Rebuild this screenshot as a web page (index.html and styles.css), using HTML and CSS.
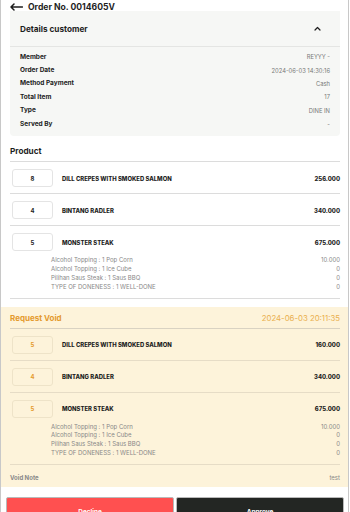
FILE: index.html
```html
<!DOCTYPE html>
<html lang="en">
<head>
    <meta charset="UTF-8">
    <meta name="viewport" content="width=device-width, initial-scale=1.0">
    <title>Order No. 0014605V</title>
    <link rel="stylesheet" href="styles.css">
</head>
<body>
    <div class="page">
        <header class="topbar">
            <svg class="back" width="13" height="8" viewBox="0 0 13 8">
                <path d="M4 1 L1 4 L4 7 M1 4 H12.5" fill="none" stroke="#1e1e1e" stroke-width="1.5" stroke-linecap="round" stroke-linejoin="round"/>
            </svg>
            <h1>Order No. 0014605V</h1>
        </header>

        <section class="details">
            <div class="details-head">
                <span>Details customer</span>
                <svg width="7" height="5" viewBox="0 0 7 5">
                    <path d="M1 4 L3.5 1.5 L6 4" fill="none" stroke="#1e1e1e" stroke-width="1.2" stroke-linecap="round" stroke-linejoin="round"/>
                </svg>
            </div>
            <div class="info">
                <div class="info-row"><span>Member</span><span>REYYY -</span></div>
                <div class="info-row"><span>Order Date</span><span>2024-06-03 14:30:16</span></div>
                <div class="info-row"><span>Method Payment</span><span>Cash</span></div>
                <div class="info-row"><span>Total Item</span><span>17</span></div>
                <div class="info-row"><span>Type</span><span>DINE IN</span></div>
                <div class="info-row"><span>Served By</span><span>-</span></div>
            </div>
        </section>

        <section class="products">
            <h2>Product</h2>
            <div class="item">
                <div class="item-main">
                    <div class="qty">8</div>
                    <div class="name">DILL CREPES WITH SMOKED SALMON</div>
                    <div class="price">256.000</div>
                </div>
            </div>
            <div class="item">
                <div class="item-main">
                    <div class="qty">4</div>
                    <div class="name">BINTANG RADLER</div>
                    <div class="price">340.000</div>
                </div>
            </div>
            <div class="item">
                <div class="item-main">
                    <div class="qty">5</div>
                    <div class="name">MONSTER STEAK</div>
                    <div class="price">675.000</div>
                </div>
                <div class="extras">
                    <div class="extra"><span>Alcohol Topping : 1 Pop Corn</span><span>10.000</span></div>
                    <div class="extra"><span>Alcohol Topping : 1 Ice Cube</span><span>0</span></div>
                    <div class="extra"><span>Pilihan Saus Steak : 1 Saus BBQ</span><span>0</span></div>
                    <div class="extra"><span>TYPE OF DONENESS : 1 WELL-DONE</span><span>0</span></div>
                </div>
            </div>
        </section>

        <section class="void">
            <div class="void-head">
                <h2>Request Void</h2>
                <span class="void-date">2024-06-03 20:11:35</span>
            </div>
            <div class="item">
                <div class="item-main">
                    <div class="qty">5</div>
                    <div class="name">DILL CREPES WITH SMOKED SALMON</div>
                    <div class="price">160.000</div>
                </div>
            </div>
            <div class="item">
                <div class="item-main">
                    <div class="qty">4</div>
                    <div class="name">BINTANG RADLER</div>
                    <div class="price">340.000</div>
                </div>
            </div>
            <div class="item">
                <div class="item-main">
                    <div class="qty">5</div>
                    <div class="name">MONSTER STEAK</div>
                    <div class="price">675.000</div>
                </div>
                <div class="extras">
                    <div class="extra"><span>Alcohol Topping : 1 Pop Corn</span><span>10.000</span></div>
                    <div class="extra"><span>Alcohol Topping : 1 Ice Cube</span><span>0</span></div>
                    <div class="extra"><span>Pilihan Saus Steak : 1 Saus BBQ</span><span>0</span></div>
                    <div class="extra"><span>TYPE OF DONENESS : 1 WELL-DONE</span><span>0</span></div>
                </div>
            </div>
            <div class="void-note">
                <span>Void Note</span>
                <span>test</span>
            </div>
        </section>

        <div class="actions">
            <button class="btn decline" type="button">Decline</button>
            <button class="btn approve" type="button">Approve</button>
        </div>
    </div>
</body>
</html>
```

FILE: styles.css
```css
body {
    margin: 0;
    padding: 0;
    background: #fff;
    font-family: Inter, "Noto Sans", sans-serif;
    color: #1e1e1e;
}
.page {
    width: 349px;
    border-left: 1px solid #c8c8c8;
    border-right: 1px solid #c8c8c8;
    min-height: 540px;
    box-sizing: border-box;
}
.topbar {
    display: flex;
    align-items: center;
    gap: 5px;
    height: 8px;
    padding: 3px 9px 0;
}
.topbar h1 {
    margin: 0;
    font-size: 8.6px;
    font-weight: 700;
    line-height: 12px;
}
.details {
    margin: 0 8px 0 9px;
    background: #f6f7f5;
    border-radius: 0 0 4px 4px;
    padding-bottom: 6px;
}
.details-head {
    display: flex;
    justify-content: space-between;
    align-items: center;
    height: 35px;
    padding: 0 19px 0 10px;
    border-bottom: 1px solid #e4e5e3;
    font-size: 8.2px;
    font-weight: 700;
}
.info {
    padding: 3px 10px 0;
}
.info-row {
    display: flex;
    justify-content: space-between;
    align-items: center;
    height: 13.4px;
    font-size: 5.8px;
}
.info-row span:first-child {
    font-size: 6.5px;
    font-weight: 700;
    color: #222;
}
.info-row span:last-child {
    color: #777;
}
.products {
    padding: 9px 8px 8px 9px;
}
.products h2 {
    margin: 0;
    font-size: 8.2px;
    font-weight: 700;
    line-height: 12px;
    padding-bottom: 4px;
    border-bottom: 1px solid #dcdcdc;
}
.item {
    padding: 7px 0 6px;
    border-bottom: 1px solid #dcdcdc;
}
.item-main {
    display: flex;
    align-items: center;
    font-size: 5.9px;
    font-weight: 800;
}
.qty {
    width: 41px;
    height: 18px;
    margin-left: 2px;
    margin-right: 9px;
    box-sizing: border-box;
    border: 1px solid #e4e4e4;
    border-radius: 3px;
    background: #fff;
    display: flex;
    align-items: center;
    justify-content: center;
    font-weight: 700;
}
.name {
    flex: 1;
}
.extras {
    padding: 5px 0 0 41px;
}
.extra {
    display: flex;
    justify-content: space-between;
    font-size: 6px;
    line-height: 8.8px;
    color: #888;
}
.void {
    background: #fdf3da;
    padding: 5px 8px 3px 9px;
}
.void-head {
    display: flex;
    justify-content: space-between;
    align-items: center;
    padding-bottom: 4px;
    border-bottom: 1px solid #d9d2c2;
    line-height: 12px;
}
.void-head h2 {
    margin: 0;
    font-size: 8px;
    font-weight: 700;
    color: #e49a2d;
}
.void-date {
    font-size: 7.8px;
    color: #eab04f;
}
.void .item {
    border-bottom-color: #e6dcc6;
}
.void .qty {
    background: #fdf3da;
    border-color: #eee3c8;
    color: #e49a2d;
}
.void-note {
    display: flex;
    justify-content: space-between;
    padding-top: 7px;
    line-height: 12px;
    font-size: 6px;
    color: #888;
}
.void-note span:first-child {
    font-weight: 700;
}
.actions {
    display: flex;
    gap: 2px;
    padding: 10px 4px 0 5px;
}
.btn {
    flex: 1;
    height: 30px;
    border: 1px solid #b9b9b9;
    border-radius: 2px;
    font-family: inherit;
    font-size: 6.4px;
    font-weight: 700;
    color: #fff;
    padding: 0;
}
.decline {
    background: #ff5050;
}
.approve {
    background: #232623;
}
```
